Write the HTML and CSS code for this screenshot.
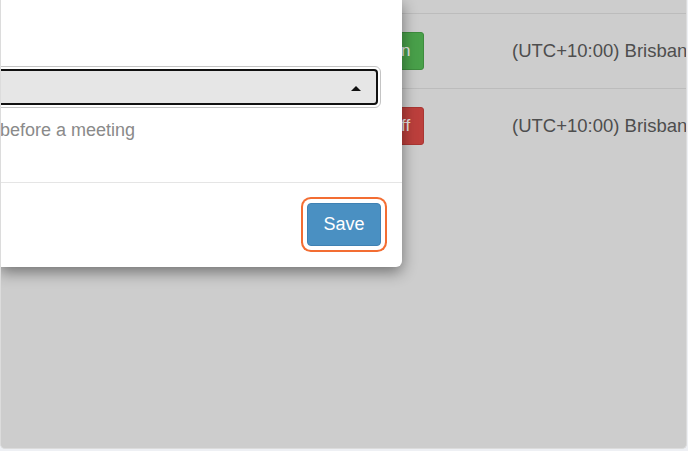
FILE: index.html
```html
<!DOCTYPE html>
<html lang="en">
<head>
<meta charset="utf-8">
<title>Meeting reminder settings</title>
<link rel="stylesheet" href="styles.css">
</head>
<body>
<div class="frame">
  <div class="page">
    <div class="row">
      <span class="btn-state on">On</span>
      <span class="tz">(UTC+10:00) Brisbane</span>
    </div>
    <div class="row">
      <span class="btn-state off">Off</span>
      <span class="tz">(UTC+10:00) Brisbane</span>
    </div>
  </div>

  <div class="modal">
    <div class="modal-body">
      <div class="select-ring">
        <div class="select">
          <span class="caret"></span>
        </div>
      </div>
      <p class="help">before a meeting</p>
    </div>
    <div class="modal-footer">
      <button class="btn-save">Save</button>
    </div>
  </div>
</div>
</body>
</html>
```

FILE: styles.css
```css
* { box-sizing: border-box; }

html, body {
  margin: 0;
  padding: 0;
}

body {
  background: #eef0f4;
  font-family: "Liberation Sans", Arial, sans-serif;
  width: 688px;
  height: 451px;
  overflow: hidden;
}

.frame {
  position: relative;
  width: 687px;
  height: 449px;
  background: #cdcdcd;
  border-right: 1px solid #dcdcdc;
  border-bottom: 1px solid #dcdcdc;
  border-left: 1px solid #dcdcdc;
  border-radius: 0 0 5px 5px;
  overflow: hidden;
}

.page {
  padding-top: 13px;
}

.row {
  display: flex;
  align-items: center;
  height: 75px;
  border-top: 1px solid #bcbcbc;
  padding-left: 367px;
  white-space: nowrap;
  overflow: hidden;
}

.btn-state {
  flex: 0 0 56px;
  display: inline-flex;
  align-items: center;
  justify-content: center;
  height: 38px;
  padding-left: 6px;
  border-radius: 3px;
  color: #e6e6e6;
  font-size: 17px;
}

.btn-state.on {
  background: #49a04a;
  border: 1px solid #3e8c3e;
}

.btn-state.off {
  background: #bc3f3c;
  border: 1px solid #a93633;
}

.tz {
  flex: 0 0 auto;
  margin-left: 88px;
  font-size: 18.5px;
  color: #4e4e4e;
}

.modal {
  position: absolute;
  top: 0;
  left: -1px;
  width: 402px;
  background: #fff;
  border-radius: 0 0 6px 0;
  box-shadow: 0 5px 15px rgba(0, 0, 0, 0.45);
}

.modal-body {
  padding: 66px 21px 40px 0;
}

.select-ring {
  height: 42px;
  margin-left: -40px;
  padding: 2px;
  border: 1px solid #c4c4c4;
  border-radius: 6px;
}

.select {
  position: relative;
  height: 100%;
  background: #e6e6e6;
  border: 2px solid #111;
  border-radius: 4px;
}

.caret {
  position: absolute;
  right: 15px;
  top: 15px;
  width: 0;
  height: 0;
  border-left: 5px solid transparent;
  border-right: 5px solid transparent;
  border-bottom: 5px solid #111;
}

.help {
  margin: 10px 0 0;
  line-height: 24px;
  font-size: 18px;
  color: #8a8a8a;
}

.modal-footer {
  display: flex;
  justify-content: flex-end;
  padding: 20px 21px 21px;
  border-top: 1px solid #e5e5e5;
}

.btn-save {
  width: 74px;
  height: 43px;
  padding: 0;
  border: 1px solid #3f81b3;
  border-radius: 4px;
  background: #4a90c2;
  color: #fff;
  font-family: "Liberation Sans", Arial, sans-serif;
  font-size: 18px;
  box-shadow: 0 0 0 4px #fff, 0 0 0 6px #f36d32;
}
```
